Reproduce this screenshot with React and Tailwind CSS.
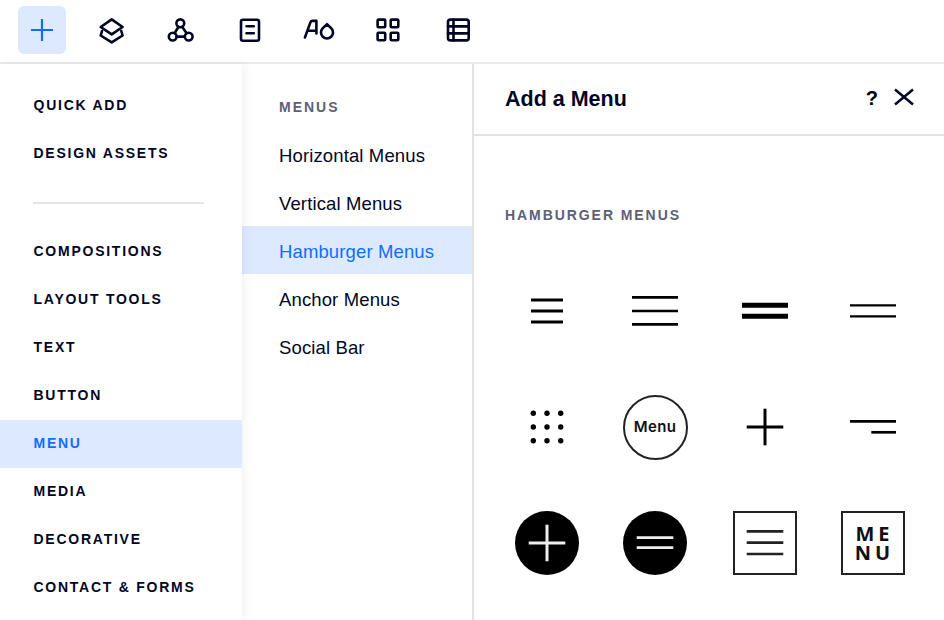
const navy = "#000624";

const toolIcons = [
  <g key="plus" />,
  <g key="layers">
    <path d="M24.7 13.4 35.6 21 24.7 28.4 13.7 21Z" />
    <path d="M15 25 13.7 29.5 24.7 36.4 35.6 29.5 34.3 25" />
  </g>,
  <g key="network">
    <circle cx="23.3" cy="17.3" r="3.9" />
    <circle cx="15.7" cy="30.6" r="3.9" />
    <circle cx="31.7" cy="30.6" r="3.9" />
    <path d="M21.5 20.8 17.6 27.2M25.2 20.8 29.6 27.2M19.6 30.6H27.8" />
  </g>,
  <g key="doc">
    <rect x="15" y="13.7" width="18" height="21" rx="2" />
    <path d="M20.5 20.2H27.8M20.5 27.2H27.8" />
  </g>,
  <g key="theme">
    <path d="M9.9 31.5 15.4 16.4Q16 14.9 17.4 14.9H21.4V27.5M12.8 24.7H21.4" />
    <path d="M32 18.2 36.4 22.4A6 6 0 1 1 27.6 22.4Z" />
  </g>,
  <g key="apps">
    <rect x="12.6" y="13.6" width="7.6" height="7.6" rx="1" />
    <rect x="25.7" y="13.6" width="7.6" height="7.6" rx="1" />
    <rect x="12.6" y="26.7" width="7.6" height="7.6" rx="1" />
    <rect x="25.7" y="26.7" width="7.6" height="7.6" rx="1" />
  </g>,
  <g key="table">
    <rect x="14" y="13.6" width="20.7" height="20.8" rx="2.5" />
    <path d="M14 20.4H34.7M14 27.4H34.7M19.5 13.6V34.4" />
  </g>,
];

const mainItems = ["COMPOSITIONS", "LAYOUT TOOLS", "TEXT", "BUTTON", "MENU", "MEDIA", "DECORATIVE", "CONTACT & FORMS"];
const subItems = ["Horizontal Menus", "Vertical Menus", "Hamburger Menus", "Anchor Menus", "Social Bar"];

const Lines = ({ rows, width = 2.7, color = "#000" }) => (
  <g stroke={color} strokeWidth={width} fill="none">
    {rows.map(([x1, x2, y]) => (
      <line key={`${x1}-${y}`} x1={x1} x2={x2} y1={y} y2={y} />
    ))}
  </g>
);

const Icon = ({ children }) => (
  <svg width="64" height="64" viewBox="0 0 64 64">
    {children}
  </svg>
);

const dots = [18.3, 32, 45.7];

const MainRow = ({ label, active }) => (
  <div
    className={`h-12 flex items-center pb-[2px] pl-[33.5px] text-[14px] font-bold tracking-[1.75px] ${
      active ? "bg-[#dce9ff] text-[#116dff]" : "text-[#000624]"
    }`}
  >
    {label}
  </div>
);

const App = () => {
  return (
    <div className="w-[944px] h-[620px] overflow-hidden bg-white flex flex-col font-['Liberation_Sans',sans-serif] text-[#000624]">
      <div className="h-[64px] shrink-0 border-b-2 border-[#e9e9e9] flex items-start pt-[6px] pl-[18px] gap-[21.33px]">
        {toolIcons.map((icon, i) => (
          <div key={i} className={`w-12 h-12 rounded-md flex items-center justify-center ${i === 0 ? "bg-[#dce9ff]" : ""}`}>
            {i === 0 ? (
              <svg width="48" height="48" viewBox="0 0 48 48" fill="none" stroke="#116dff" strokeWidth="2.2">
                <path d="M24 13V35M13 24H35" />
              </svg>
            ) : (
              <svg width="48" height="48" viewBox="0 0 48 48" fill="none" stroke={navy} strokeWidth="2.6" strokeLinejoin="round" strokeLinecap="round">
                {icon}
              </svg>
            )}
          </div>
        ))}
      </div>

      <div className="flex flex-1 min-h-0">
        <div className="w-[242px] shrink-0 pt-[18px] bg-white shadow-[2px_0_10px_rgba(0,0,0,0.06)] z-10">
          <MainRow label="QUICK ADD" />
          <MainRow label="DESIGN ASSETS" />
          <div className="h-[50px] flex items-center pl-[33px]">
            <div className="w-[171px] h-[2px] bg-[#e5e5e5]" />
          </div>
          {mainItems.map((item) => (
            <MainRow key={item} label={item} active={item === "MENU"} />
          ))}
        </div>

        <div className="w-[232px] shrink-0 border-r-2 border-[#e3e3e3] pt-[18px]">
          <div className="h-12 flex items-center pt-[2px] pl-[37px] text-[14px] font-bold tracking-[2px] text-[#5c6178]">MENUS</div>
          {subItems.map((item) => (
            <div
              key={item}
              className={`h-12 flex items-center pt-[3px] pl-[37px] text-[18.5px] tracking-[0.13px] ${
                item === "Hamburger Menus" ? "bg-[#dce9ff] text-[#116dff]" : ""
              }`}
            >
              {item}
            </div>
          ))}
        </div>

        <div className="flex-1 min-w-0">
          <div className="h-[72px] border-b-2 border-[#e3e3e3] flex items-center justify-between pl-[31px] pr-[30px]">
            <div className="text-[21.5px] font-bold">Add a Menu</div>
            <div className="flex items-center gap-[16px]">
              <span className="text-[20px] font-bold text-[#000] pb-[2px]">?</span>
              <svg width="20" height="20" viewBox="0 0 20 20" fill="none" stroke={navy} strokeWidth="2.5" className="mb-[5px]">
                <path d="M1 2.5 19 17.5M19 2.5 1 17.5" />
              </svg>
            </div>
          </div>

          <div className="pl-[31px] pt-[70px] text-[14px] font-bold tracking-[1.93px] text-[#5c6178] leading-[18px]">HAMBURGER MENUS</div>

          <div className="ml-[41px] mt-[55px] grid grid-cols-[108px_110px_108px_64px] gap-y-[52px]">
            <Icon><Lines width={3} rows={[[16, 48, 21], [16, 48, 32], [16, 48, 43]]} /></Icon>
            <Icon><Lines rows={[[9, 55, 18.3], [9, 55, 32], [9, 55, 45.3]]} /></Icon>
            <Icon><Lines width={5} rows={[[9, 55, 26.3], [9, 55, 37.3]]} /></Icon>
            <Icon><Lines width={2.2} rows={[[9, 55, 26.3], [9, 55, 37.3]]} /></Icon>

            <Icon>
              {dots.map((x) => dots.map((y) => <circle key={`${x}-${y}`} cx={x} cy={y} r="2.7" fill="#000" />))}
            </Icon>
            <div className="w-[65px] h-[65px] -ml-[0.5px] -mt-[0.5px] -mb-[0.5px] rounded-full border-2 border-[#222] flex items-center justify-center font-['Inter',sans-serif] text-[15px] font-semibold tracking-[0.4px] text-[#111]">Menu</div>
            <Icon><Lines width={3} rows={[[13.7, 50.3, 32]]} /><path d="M32 13.7V50.3" stroke="#000" strokeWidth="3" /></Icon>
            <Icon><Lines rows={[[9, 55, 26.3], [30.3, 55, 37.3]]} /></Icon>

            <Icon>
              <circle cx="32" cy="32" r="32" fill="#000" />
              <Lines width={3} color="#eee" rows={[[13.7, 50.3, 32]]} />
              <path d="M32 13.7V50.3" stroke="#eee" strokeWidth="3" />
            </Icon>
            <Icon>
              <circle cx="32" cy="32" r="32" fill="#000" />
              <Lines color="#eee" rows={[[13.7, 50.3, 26.7], [13.7, 50.3, 36.7]]} />
            </Icon>
            <Icon>
              <rect x="1" y="1" width="62" height="62" fill="none" stroke="#222" strokeWidth="2" />
              <Lines color="#222" rows={[[13.7, 50.3, 20.3], [13.7, 50.3, 31.7], [13.7, 50.3, 43]]} />
            </Icon>
            <div className="w-16 h-16 border-2 border-[#222] flex flex-col items-center justify-center font-['Open_Sans',sans-serif] text-[20px] font-bold leading-[19px] tracking-[0.2em] text-[#111] pl-[3px]">
              <span>ME</span>
              <span>NU</span>
            </div>
          </div>
        </div>
      </div>
    </div>
  );
};

export default App;
